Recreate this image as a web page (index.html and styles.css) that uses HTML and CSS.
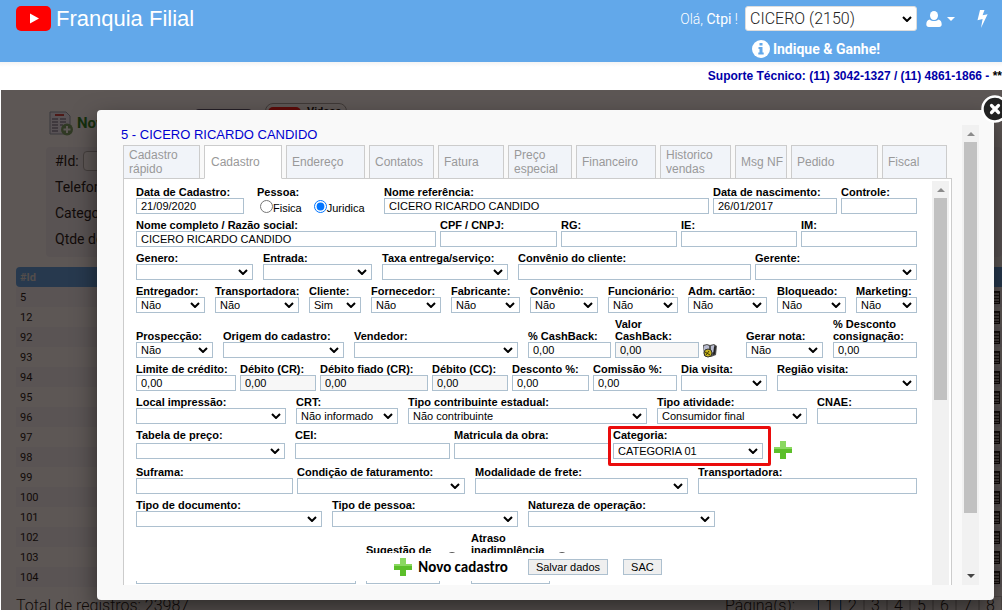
FILE: index.html
```html
<!DOCTYPE html>
<html lang="pt-BR">
<head>
    <meta charset="UTF-8">
    <meta name="viewport" content="width=device-width, initial-scale=1.0">
    <title>Franquia Filial - Cadastro</title>
    <link rel="stylesheet" href="styles.css">
</head>
<body>
    <header class="topbar">
        <div class="brand">
            <svg class="brand-icon" viewBox="0 0 35 25"><rect width="35" height="25" rx="5" fill="#f00"/><path d="M14 7.5v10l9-5z" fill="#fff"/></svg>
            <span>Franquia Filial</span>
        </div>
        <div class="account">
            <div class="account-row">
                <label for="filial">Olá, <b>Ctpi</b> !</label>
                <select id="filial" class="filial"><option>CICERO (2150)</option></select>
                <a href="#" class="user-link" aria-label="Usuário">
                    <svg width="16" height="16" viewBox="0 0 16 16" fill="#fff"><ellipse cx="8" cy="4.5" rx="4" ry="4.5"/><path d="M3.500 8.500C1.200 9.200.3 11 .3 13.500.3 15 1.300 16 2.800 16h10.400c1.500 0 2.500-1 2.500-2.500 0-2.500-.9-4.300-3.200-5-2.500 2-6.500 2-9 0z"/></svg>
                    <svg width="8" height="4" viewBox="0 0 8 4" fill="#fff"><path d="M0 0h8L4 4z"/></svg>
                </a>
                <a href="#" class="bolt-link" aria-label="Atalhos">
                    <svg width="11" height="18" viewBox="0 0 11 18" fill="#fff"><path d="M3 0h4.500L5.600 5.300 10.600 4.200 4 18l1.600-9L.5 10.200z"/></svg>
                </a>
            </div>
            <a href="#" class="indique">
                <svg width="18" height="18" viewBox="0 0 18 18"><circle cx="9" cy="9" r="9" fill="#fff"/><path d="M7.500 3h3v2.600h-3zM6.500 7h4v5.500h1.200v2H6.300v-2h1.200V9h-1z" fill="#62a8ea"/></svg>
                Indique &amp; Ganhe!
            </a>
        </div>
    </header>
    <div class="suporte"><p>Suporte Técnico: (11) 3042-1327 / (11) 4861-1866 - <span>**</span></p></div>

    <main class="page">
        <div class="toolbar">
            <a href="#" class="novo">
                <svg width="24" height="25" viewBox="0 0 24 25"><path d="M1 1h16l4 4v18H1z" fill="#eef" stroke="#89a"/><path d="M6 4h9" stroke="#c33" stroke-width="2"/><path d="M3 8h6M3 11h6M3 14h6M3 17h6M3 20h6M11 8h6M11 11h6M11 14h3" stroke="#446"/><circle cx="18" cy="18.500" r="6" fill="#6a9a5a"/><path d="M18 15v7M14.500 18.500h7" stroke="#fff" stroke-width="2"/></svg>
                Novo
            </a>
            <span class="tool-button"></span>
            <a href="#" class="videos"><i></i>Videos</a>
        </div>
        <div class="filters">
            <label for="f1">#Id:</label><input id="f1" type="text">
            <label for="f2" class="largo">Telefone:</label>
            <input id="f2" type="text">
            <label for="f3" class="largo">Categoria:</label>
            <input id="f3" type="text">
            <label for="f4" class="largo">Qtde de itens:</label>
            <input id="f4" type="text">
        </div>
        <table class="lista">
            <thead><tr><th>#Id</th><th></th></tr></thead>
            <tbody>
                <tr><td>5</td><td><i class="menu-icon"></i></td></tr>
                <tr><td>12</td><td><i class="menu-icon"></i></td></tr>
                <tr><td>92</td><td><i class="menu-icon"></i></td></tr>
                <tr><td>93</td><td><i class="menu-icon"></i></td></tr>
                <tr><td>94</td><td><i class="menu-icon"></i></td></tr>
                <tr><td>95</td><td><i class="menu-icon"></i></td></tr>
                <tr><td>96</td><td><i class="menu-icon"></i></td></tr>
                <tr><td>97</td><td><i class="menu-icon"></i></td></tr>
                <tr><td>98</td><td><i class="menu-icon"></i></td></tr>
                <tr><td>99</td><td><i class="menu-icon"></i></td></tr>
                <tr><td>100</td><td><i class="menu-icon"></i></td></tr>
                <tr><td>101</td><td><i class="menu-icon"></i></td></tr>
                <tr><td>102</td><td><i class="menu-icon"></i></td></tr>
                <tr><td>103</td><td><i class="menu-icon"></i></td></tr>
                <tr><td>104</td><td><i class="menu-icon"></i></td></tr>
            </tbody>
        </table>
        <div class="rodape">
            <span>Total de registros: 23987</span>
            <nav class="paginas">
                <span>Página(s):</span>
                <a href="#" class="atual">1</a><a href="#">2</a><a href="#">3</a><a href="#">4</a><a href="#">5</a><a href="#">6</a><a href="#">7</a><a href="#">8</a>
            </nav>
        </div>
        <div class="overlay"></div>
    </main>

    <section class="modal" role="dialog" aria-labelledby="titulo">
        <button type="button" class="fechar" aria-label="Fechar">
            <svg width="28" height="28" viewBox="0 0 28 28"><circle cx="14" cy="14" r="12.500" fill="#222" stroke="#fff" stroke-width="2.500"/><path d="M10.500 10.500l7 7M17.500 10.500l-7 7" stroke="#fff" stroke-width="3.200" stroke-linecap="round"/></svg>
        </button>
        <div class="conteudo">
            <h1 id="titulo">5 - CICERO RICARDO CANDIDO</h1>
            <nav class="tabs">
                <a href="#">Cadastro rápido</a>
                <a href="#" class="ativo">Cadastro</a>
                <a href="#">Endereço</a>
                <a href="#">Contatos</a>
                <a href="#">Fatura</a>
                <a href="#">Preço especial</a>
                <a href="#">Financeiro</a>
                <a href="#">Historico vendas</a>
                <a href="#">Msg&nbsp;NF</a>
                <a href="#">Pedido</a>
                <a href="#">Fiscal</a>
            </nav>
            <div class="painel">
                <form>
                    <div class="linha identificacao">
                        <div class="campo"><label for="cadastro">Data de Cadastro:</label><input id="cadastro" type="text" value="21/09/2020"></div>
                        <fieldset class="campo pessoa">
                            <legend>Pessoa:</legend>
                            <div class="opcoes">
                                <input type="radio" name="pessoa" id="fisica"><label for="fisica">Fisica</label>
                                <input type="radio" name="pessoa" id="juridica" checked><label for="juridica">Juridica</label>
                            </div>
                        </fieldset>
                        <div class="campo"><label for="referencia">Nome referência:</label><input id="referencia" type="text" value="CICERO RICARDO CANDIDO"></div>
                        <div class="campo"><label for="nascimento">Data de nascimento:</label><input id="nascimento" type="text" value="26/01/2017"></div>
                        <div class="campo"><label for="controle">Controle:</label><input id="controle" type="text"></div>
                    </div>
                    <div class="linha documentos">
                        <div class="campo"><label for="nome">Nome completo / Razão social:</label><input id="nome" type="text" value="CICERO RICARDO CANDIDO"></div>
                        <div class="campo"><label for="cpf">CPF / CNPJ:</label><input id="cpf" type="text"></div>
                        <div class="campo"><label for="rg">RG:</label><input id="rg" type="text"></div>
                        <div class="campo"><label for="ie">IE:</label><input id="ie" type="text"></div>
                        <div class="campo"><label for="im">IM:</label><input id="im" type="text"></div>
                    </div>
                    <div class="linha entrada">
                        <div class="campo lista-campo"><label for="genero">Genero:</label><select id="genero"><option></option></select></div>
                        <div class="campo lista-campo"><label for="entrada">Entrada:</label><select id="entrada"><option></option></select></div>
                        <div class="campo lista-campo"><label for="taxa">Taxa entrega/serviço:</label><select id="taxa"><option></option></select></div>
                        <div class="campo"><label for="conveniocli">Convênio do cliente:</label><input id="conveniocli" type="text"></div>
                        <div class="campo lista-campo"><label for="gerente">Gerente:</label><select id="gerente"><option></option></select></div>
                    </div>
                    <div class="linha tipos">
                        <div class="campo lista-campo"><label for="entregador">Entregador:</label><select id="entregador"><option>Não</option></select></div>
                        <div class="campo lista-campo"><label for="transportador">Transportadora:</label><select id="transportador"><option>Não</option></select></div>
                        <div class="campo lista-campo"><label for="cliente">Cliente:</label><select id="cliente"><option>Sim</option></select></div>
                        <div class="campo lista-campo"><label for="fornecedor">Fornecedor:</label><select id="fornecedor"><option>Não</option></select></div>
                        <div class="campo lista-campo"><label for="fabricante">Fabricante:</label><select id="fabricante"><option>Não</option></select></div>
                        <div class="campo lista-campo"><label for="convenio">Convênio:</label><select id="convenio"><option>Não</option></select></div>
                        <div class="campo lista-campo"><label for="funcionario">Funcionário:</label><select id="funcionario"><option>Não</option></select></div>
                        <div class="campo lista-campo"><label for="cartao">Adm. cartão:</label><select id="cartao"><option>Não</option></select></div>
                        <div class="campo lista-campo"><label for="bloqueado">Bloqueado:</label><select id="bloqueado"><option>Não</option></select></div>
                        <div class="campo lista-campo"><label for="marketing">Marketing:</label><select id="marketing"><option>Não</option></select></div>
                    </div>
                    <div class="linha vendas">
                        <div class="campo lista-campo"><label for="prospeccao">Prospecção:</label><select id="prospeccao"><option>Não</option></select></div>
                        <div class="campo lista-campo"><label for="origem">Origem do cadastro:</label><select id="origem"><option></option></select></div>
                        <div class="campo lista-campo"><label for="vendedor">Vendedor:</label><select id="vendedor"><option></option></select></div>
                        <div class="campo"><label for="cashback">% CashBack:</label><input id="cashback" type="text" value="0,00"></div>
                        <div class="campo"><label for="valorcash">Valor<br>CashBack:</label><input id="valorcash" type="text" value="0,00" readonly></div>
                        <svg class="cofre" width="14" height="15" viewBox="0 0 14 15"><path d="M0 2l4-1 3 1 4-1 3 2-1 9-5 2-7-1z" fill="#555"/><path d="M1 3l3-1 2 1v6l-5-1zM8 3l3-1v7l-3 1z" fill="#b9bcd0"/><path d="M11 4l2-1-1 8-2 1z" fill="#222"/><circle cx="5" cy="10" r="4" fill="#c8b420" stroke="#333"/><path d="M2 9l5 3M3 12l3-4" stroke="#443c00"/></svg>
                        <div class="campo lista-campo"><label for="nota">Gerar nota:</label><select id="nota"><option>Não</option></select></div>
                        <div class="campo"><label for="consignacao">% Desconto consignação:</label><input id="consignacao" type="text" value="0,00"></div>
                    </div>
                    <div class="linha credito">
                        <div class="campo"><label for="limite">Limite de crédito:</label><input id="limite" type="text" value="0,00"></div>
                        <div class="campo"><label for="debcr">Débito (CR):</label><input id="debcr" type="text" value="0,00" readonly></div>
                        <div class="campo"><label for="fiado">Débito fiado (CR):</label><input id="fiado" type="text" value="0,00" readonly></div>
                        <div class="campo"><label for="debcc">Débito (CC):</label><input id="debcc" type="text" value="0,00" readonly></div>
                        <div class="campo"><label for="desconto">Desconto %:</label><input id="desconto" type="text" value="0,00"></div>
                        <div class="campo"><label for="comissao">Comissão %:</label><input id="comissao" type="text" value="0,00"></div>
                        <div class="campo lista-campo"><label for="dia">Dia visita:</label><select id="dia"><option></option></select></div>
                        <div class="campo lista-campo"><label for="regiao">Região visita:</label><select id="regiao"><option></option></select></div>
                    </div>
                    <div class="linha atividade">
                        <div class="campo lista-campo"><label for="impressao">Local impressão:</label><select id="impressao"><option></option></select></div>
                        <div class="campo lista-campo"><label for="crt">CRT:</label><select id="crt"><option>Não informado</option></select></div>
                        <div class="campo lista-campo"><label for="contribuinte">Tipo contribuinte estadual:</label><select id="contribuinte"><option>Não contribuinte</option></select></div>
                        <div class="campo lista-campo"><label for="tipoativ">Tipo atividade:</label><select id="tipoativ"><option>Consumidor final</option></select></div>
                        <div class="campo"><label for="cnae">CNAE:</label><input id="cnae" type="text"></div>
                    </div>
                    <div class="linha categoria">
                        <div class="campo lista-campo"><label for="tabela">Tabela de preço:</label><select id="tabela"><option></option></select></div>
                        <div class="campo"><label for="cei">CEI:</label><input id="cei" type="text"></div>
                        <div class="campo"><label for="obra">Matricula da obra:</label><input id="obra" type="text"></div>
                        <div class="campo lista-campo destaque"><label for="categoria">Categoria:</label><select id="categoria"><option>CATEGORIA 01</option></select></div>
                        <a href="#" class="adicionar" aria-label="Nova categoria"><svg class="mais" viewBox="0 0 18 18"><path d="M6 0h6v6h6v6h-6v6H6v-6H0V6h6z" fill="#5cbf2a"/><path d="M6 0h6v6h6v2H0V6h6z" fill="#8ad860"/></svg></a>
                    </div>
                    <div class="linha frete">
                        <div class="campo"><label for="suframa">Suframa:</label><input id="suframa" type="text"></div>
                        <div class="campo lista-campo"><label for="condicao">Condição de faturamento:</label><select id="condicao"><option></option></select></div>
                        <div class="campo lista-campo"><label for="modalidade">Modalidade de frete:</label><select id="modalidade"><option></option></select></div>
                        <div class="campo"><label for="transportadora">Transportadora:</label><input id="transportadora" type="text"></div>
                    </div>
                    <div class="linha fiscal">
                        <div class="campo lista-campo"><label for="documento">Tipo de documento:</label><select id="documento"><option></option></select></div>
                        <div class="campo lista-campo"><label for="tipopessoa">Tipo de pessoa:</label><select id="tipopessoa"><option></option></select></div>
                        <div class="campo lista-campo"><label for="natureza">Natureza de operação:</label><select id="natureza"><option></option></select></div>
                    </div>
                    <div class="linha atraso">
                        <div class="campo lista-campo"><input type="text" aria-label="Observação"></div>
                        <div class="campo"><label for="sugestao">Sugestão de</label><input id="sugestao" type="text"></div>
                        <i class="ajuda"></i>
                        <div class="campo"><label for="inadimplencia">Atraso inadimplência</label><input id="inadimplencia" type="text"></div>
                        <i class="ajuda"></i>
                    </div>
                </form>
                <div class="rolagem">
                    <svg width="8" height="4" viewBox="0 0 8 4"><path d="M0 4h8L4 0z" fill="#8b8b8b"/></svg>
                    <div class="trilho"><i class="polegar-interno"></i></div>
                </div>
                <div class="acoes">
                    <a href="#" class="novo-cadastro"><svg class="mais" viewBox="0 0 18 18"><path d="M6 0h6v6h6v6h-6v6H6v-6H0V6h6z" fill="#5cbf2a"/><path d="M6 0h6v6h6v2H0V6h6z" fill="#8ad860"/></svg>Novo cadastro</a>
                    <button type="button">Salvar dados</button>
                    <button type="button">SAC</button>
                </div>
            </div>
        </div>
        <div class="rolagem">
            <svg width="8" height="4" viewBox="0 0 8 4"><path d="M0 4h8L4 0z" fill="#8b8b8b"/></svg>
            <div class="trilho"><i class="polegar"></i></div>
            <svg width="8" height="4" viewBox="0 0 8 4"><path d="M0 0h8L4 4z" fill="#444"/></svg>
        </div>
    </section>
</body>
</html>
```

FILE: styles.css
```css
:root {
    --azul: #62a8ea;
    --borda: #adc0cf;
    --seta: url("data:image/svg+xml,%3Csvg xmlns='http://www.w3.org/2000/svg' viewBox='0 0 10 6'%3E%3Cpath d='M1 1l4 4 4-4' fill='none' stroke='%23000' stroke-width='2'/%3E%3C/svg%3E");
}

* {
    margin: 0;
    padding: 0;
    box-sizing: border-box;
}

html,
body {
    height: 100%;
    overflow: hidden;
}

body {
    display: flex;
    flex-direction: column;
    position: relative;
    font-family: "Liberation Sans", Arial, sans-serif;
    font-size: 11px;
    color: #000;
    background-color: #fff;
}

a {
    color: inherit;
    text-decoration: none;
}

svg {
    display: block;
    flex: none;
}

input,
select,
button {
    font: inherit;
    color: inherit;
}

select {
    appearance: none;
    background: #fff var(--seta) no-repeat right 4px center / 10px 6px;
}

/* Topo */
.topbar {
    display: flex;
    justify-content: space-between;
    height: 62px;
    flex: none;
    padding: 6px 14px 0 16px;
    background-color: var(--azul);
    color: #fff;
    font-family: Roboto, sans-serif;
    font-size: 14px;
}

.brand {
    display: flex;
    align-items: center;
    gap: 5px;
    height: 25px;
    font-family: "Liberation Sans", Arial, sans-serif;
    font-size: 22px;
}

.brand-icon {
    width: 35px;
    height: 25px;
}

.account-row {
    display: flex;
    align-items: center;
    height: 25px;
    font-weight: 300;
}

.filial {
    width: 172px;
    height: 25px;
    margin: 0 9px 0 7px;
    padding: 0 4px;
    border: 1px solid #ddd;
    border-radius: 3px;
    color: #222;
    font-size: 16px;
}

.user-link {
    display: flex;
    align-items: center;
    gap: 5px;
}

.bolt-link {
    margin-left: 22px;
}

.indique {
    display: flex;
    align-items: center;
    justify-content: flex-end;
    gap: 3px;
    margin-top: 9px;
    padding-right: 108px;
    font-weight: 700;
}

.suporte {
    flex: none;
    height: 28px;
    overflow: hidden;
    background: linear-gradient(#f4f4f4, #fff 5px);
    color: #0000a8;
    font-size: 12px;
    font-weight: bold;
    line-height: 28px;
    text-align: right;
    white-space: nowrap;
}

.suporte span {
    color: #000;
}

/* Lista ao fundo */
.page {
    flex: 1;
    position: relative;
    min-height: 0;
    overflow: hidden;
    margin-left: 1px;
    padding: 13px 0 0 15px;
    font-family: Roboto, sans-serif;
}

.overlay {
    position: absolute;
    inset: 0;
    background-color: rgba(24, 16, 13, 0.7);
}

.toolbar {
    display: flex;
    height: 44px;
    padding-left: 33px;
}

.novo {
    display: flex;
    align-items: center;
    gap: 4px;
    width: 146px;
    height: 40px;
    color: #107a10;
    font-size: 15px;
    font-weight: bold;
}

.tool-button {
    width: 57px;
    height: 30px;
    margin: 6px 13px 0 0;
    border-radius: 4px;
    background-color: #446;
}

.videos {
    display: flex;
    gap: 6px;
    width: 82px;
    height: 40px;
    padding: 1px 2px;
    border: 1px solid #999;
    border-radius: 8px;
    font-weight: bold;
}

.videos i {
    width: 33px;
    height: 25px;
    margin-top: 2px;
    border-radius: 5px;
    background-color: #f00;
}

.filters {
    display: grid;
    grid-template-columns: 24px 64px 1fr;
    grid-auto-rows: 20px;
    gap: 6px 4px;
    height: 110px;
    margin: 0 0 10px 30px;
    padding: 4px 9px 0;
    border-radius: 4px;
    background-color: #f0f0f8;
    font-size: 14px;
    line-height: 20px;
    white-space: nowrap;
}

.filters .largo {
    grid-column: 1 / 3;
}

.filters input {
    grid-column: 3;
    border: 1px solid #aaa;
    border-radius: 4px;
}

.filters input:nth-child(2) {
    grid-column: 2 / 4;
}

.lista {
    width: 100%;
    border-collapse: collapse;
}

.lista th,
.lista td {
    height: 20px;
    padding: 0 4px;
    text-align: left;
}

.lista th {
    background-color: #4a9be8;
    color: #ddd;
}

.lista th:first-child {
    border-radius: 4px 0 0 4px;
}

.lista tbody tr:nth-child(even) {
    background-color: #fff;
}

.lista tbody tr:nth-child(odd) {
    background-color: #f4f4fa;
}

.lista td:last-child {
    width: 16px;
    padding: 0 1px 0 0;
}

.menu-icon {
    display: block;
    width: 14px;
    height: 13px;
    border: 1px solid #000;
    background: repeating-linear-gradient(#111 0 1px, #aaa 1px 3px);
}

.rodape {
    display: flex;
    justify-content: space-between;
    padding-top: 9px;
    font-size: 16px;
    font-weight: 300;
    line-height: 20px;
}

.paginas {
    display: flex;
}

.paginas span {
    margin-right: 23px;
}

.paginas a {
    width: 23px;
    border: 1px solid #ccc;
    line-height: 18px;
    text-align: center;
}

.paginas .atual {
    border-color: #06c;
}

/* Janela */
.modal {
    position: absolute;
    inset: 110px 8px 10px 97px;
    display: flex;
    padding: 15px;
    border-radius: 4px;
    background-color: #f9f9f9;
    box-shadow: 0 10px 25px rgba(0, 0, 0, 0.5);
}

.fechar {
    position: absolute;
    top: -15px;
    right: -15px;
    border: none;
    background: none;
}

.conteudo {
    display: flex;
    flex: 1;
    flex-direction: column;
    min-width: 0;
    padding: 0 10px 0 11px;
}

h1 {
    margin-left: -2px;
    color: #0000d0;
    font-size: 13px;
    font-weight: normal;
    line-height: 20px;
}

.tabs {
    display: grid;
    grid-template-columns: 77fr 78fr 79fr 65fr 66fr 64fr 80fr 71fr 52fr 87fr 65fr;
    gap: 4px;
    flex: none;
    height: 34px;
    padding-right: 5px;
    position: relative;
    z-index: 1;
}

.tabs a {
    display: flex;
    align-items: center;
    min-width: 0;
    padding: 0 5px;
    border: 1px solid #ccc;
    background-color: #f1f4f9;
    color: #999;
    font-size: 12px;
    line-height: 14px;
}

.tabs .ativo {
    padding-left: 6px;
    border-bottom-color: #fff;
    background-color: #fff;
}

.painel {
    display: flex;
    flex: 1;
    min-height: 0;
    position: relative;
    overflow: hidden;
    margin-top: -1px;
    padding: 2px 2px 0 0;
    border: 1px solid #ccc;
    border-bottom: none;
    background-color: #fff;
}

form {
    flex: 1;
    min-width: 0;
    padding: 5px 15px 0 12px;
}

.linha {
    display: grid;
    align-items: end;
    margin-bottom: 5px;
}

.identificacao { grid-template-columns: 112fr 136fr 329fr 128fr 76fr; }
.documentos { grid-template-columns: 304fr 121fr 120fr 120fr 116fr; }
.entrada { grid-template-columns: 127fr 119fr 136fr 237fr 162fr; }
.tipos { grid-template-columns: 79fr 94fr 62fr 80fr 79fr 78fr 80fr 89fr 79fr 61fr; }
.vendas { grid-template-columns: 87fr 131fr 174fr 87fr 88fr 43fr 87fr 84fr; }
.credito { grid-template-columns: 104fr 80fr 112fr 80fr 81fr 88fr 96fr 140fr; }
.atividade { grid-template-columns: 160fr 112fr 249fr 160fr 100fr; }
.categoria { grid-template-columns: 159fr 159fr 159fr 160fr 144fr; }
.frete { grid-template-columns: 161fr 178fr 223fr 219fr; }
.fiscal { grid-template-columns: 196fr 196fr 197fr 192fr; }
.atraso { grid-template-columns: 230fr 78fr 27fr 83fr 363fr; }

.campo {
    min-width: 0;
    padding-right: 4px;
    border: none;
}

.lista-campo {
    padding-right: 10px;
}

.linha:not(.fiscal) > .campo:last-child {
    padding-right: 0;
}

.campo label,
.campo legend {
    display: block;
    font-weight: bold;
    line-height: 12px;
    white-space: nowrap;
}

.vendas label,
.atraso label {
    white-space: normal;
}

.campo input[type="text"],
.campo select {
    display: block;
    width: 100%;
    height: 16px;
    padding: 0 4px;
    border: 1px solid var(--borda);
    border-radius: 0;
}

.campo input[readonly] {
    background-color: #f7f7f7;
}

.pessoa {
    padding-left: 9px;
}

.opcoes {
    display: flex;
    align-items: center;
    height: 16px;
    padding-left: 3px;
}

.opcoes label {
    margin: 4px 12px 0 0;
    font-weight: normal;
}

.opcoes input {
    width: 13px;
    height: 13px;
}

.categoria {
    margin-bottom: 7px;
}

.categoria label {
    padding-bottom: 2px;
}

.destaque {
    position: relative;
}

.destaque::after {
    content: "";
    position: absolute;
    inset: -3px 2px -7px -5px;
    border: 3px solid #ea0c0c;
    border-radius: 2px;
    pointer-events: none;
}

.mais {
    width: 18px;
    height: 18px;
}

.adicionar {
    padding-left: 1px;
}

.atraso label {
    padding-bottom: 12px;
}

.ajuda {
    align-self: center;
    justify-self: start;
    width: 12px;
    height: 12px;
    margin-left: 2px;
    border: 1px solid #555;
    border-radius: 50%;
}

.acoes {
    position: absolute;
    right: 19px;
    bottom: 4px;
    left: 0;
    display: flex;
    align-items: center;
    justify-content: center;
    height: 28px;
    background-color: #fff;
}

.acoes button {
    height: 16px;
    padding: 0 7px;
    border: 1px solid var(--borda);
    background-color: #efefef;
    line-height: 14px;
}

.acoes button + button {
    margin-left: 15px;
}

.novo-cadastro {
    display: flex;
    align-items: center;
    gap: 6px;
    margin-right: 20px;
    font-family: Calibri, Lato, sans-serif;
    font-size: 15px;
    font-weight: bold;
}

/* Barras de rolagem */
.rolagem {
    display: flex;
    flex: none;
    flex-direction: column;
    align-items: center;
    width: 17px;
    padding: 7px 0;
    background-color: #f1f1f1;
}

.trilho {
    flex: 1;
    width: 13px;
    margin: 6px 0;
}

.trilho i {
    display: block;
    background-color: #c1c1c1;
}

.polegar {
    height: 87%;
}

.polegar-interno {
    height: 54%;
}
```
